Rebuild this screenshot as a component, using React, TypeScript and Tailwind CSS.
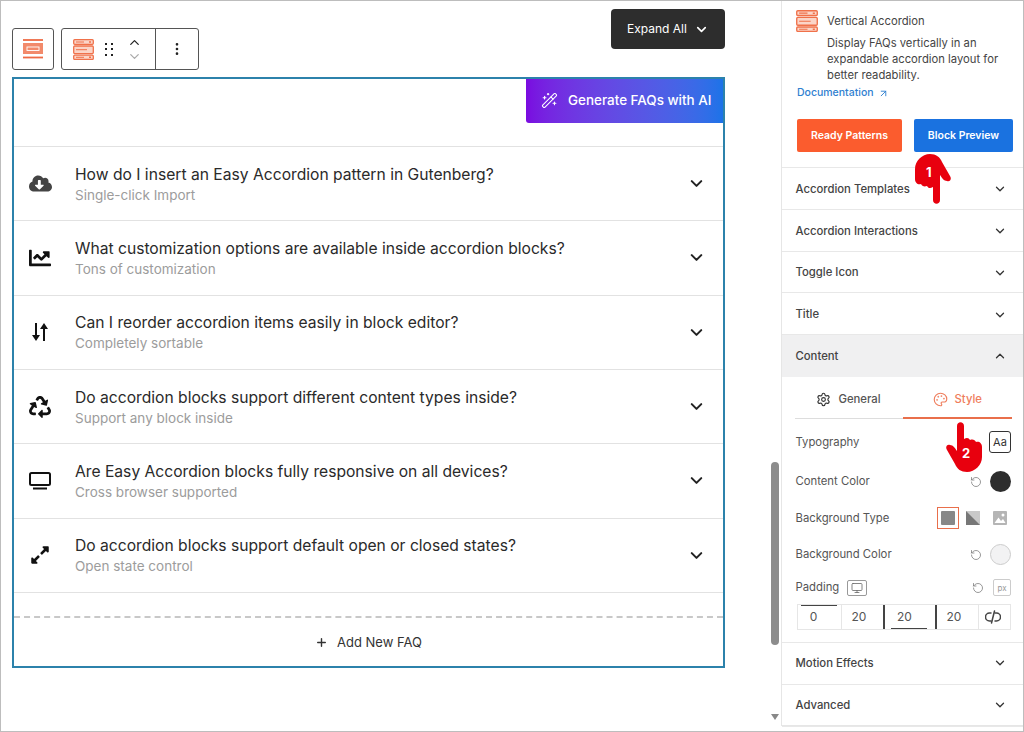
import React from 'react';
import { ArrowUpRight, ChevronDown, ChevronUp, Monitor, MoreVertical, Palette, Plus, RotateCcw, Settings, WandSparkles } from 'lucide-react';
import { FaChartLine, FaCloudDownloadAlt, FaExpandAlt, FaRecycle } from 'react-icons/fa';

const faqs = [
  { title: 'How do I insert an Easy Accordion pattern in Gutenberg?', sub: 'Single-click Import', icon: <FaCloudDownloadAlt className="w-[23px] h-[23px] text-[#444]" /> },
  { title: 'What customization options are available inside accordion blocks?', sub: 'Tons of customization', icon: <FaChartLine className="w-[22px] h-[22px] text-[#111]" /> },
  { title: 'Can I reorder accordion items easily in block editor?', sub: 'Completely sortable', icon: <SortIcon /> },
  { title: 'Do accordion blocks support different content types inside?', sub: 'Support any block inside', icon: <FaRecycle className="w-[22px] h-[22px] text-[#111]" /> },
  { title: 'Are Easy Accordion blocks fully responsive on all devices?', sub: 'Cross browser supported', icon: <LaptopIcon /> },
  { title: 'Do accordion blocks support default open or closed states?', sub: 'Open state control', icon: <FaExpandAlt className="w-[20px] h-[20px] text-[#111]" /> },
];

const closedTop = ['Accordion Templates', 'Accordion Interactions', 'Toggle Icon', 'Title'];

function SortIcon() {
  return (
    <svg viewBox="0 0 16 18" className="w-[16px] h-[18px]" fill="#111">
      <path d="M3 0h2v12h3l-4 6-4-6h3z" />
      <path d="M11 18h2V6h3l-4-6-4 6h3z" />
    </svg>
  );
}

function LaptopIcon() {
  return (
    <svg viewBox="0 0 22 18" className="w-[22px] h-[18px]" fill="none" stroke="#111" strokeWidth="2">
      <rect x="1" y="1" width="20" height="12" rx="1.5" />
      <path d="M4 16.5h14" />
    </svg>
  );
}

function StackIcon({ className }: { className: string }) {
  return (
    <svg viewBox="0 0 21 21" className={className} fill="none" stroke="#f0714a" strokeWidth="1.3">
      <rect x="0.7" y="0.7" width="19.6" height="4.6" rx="1" fill="#fbd5c8" />
      <rect x="0.7" y="7" width="19.6" height="7.6" rx="1" fill="#fbd5c8" />
      <rect x="0.7" y="16.2" width="19.6" height="4.2" rx="1" fill="#fbd5c8" />
      <path d="M3 3h8M3 10.7h11M3 18.3h8" strokeWidth="1" />
      <path d="M16 3h2M16 18.3h2" strokeWidth="1.4" />
    </svg>
  );
}

function Hand({ className }: { className: string }) {
  return (
    <svg viewBox="0 0 36 50" className={className}>
      <path
        fill="#e8000e"
        d="M11 4c0-5 7-5 7 0v13c3-2 5-1 6 1 3-1 5 0 6 2 3-1 6 1 6 5v10c0 8-7 15-15 15-6 0-10-3-12-8L1 28c-2-3 0-6 3-5 3 0 5 3 7 6z"
      />
    </svg>
  );
}

function SideRow({ label, h }: { label: string; h: string }) {
  return (
    <div className={`flex items-center justify-between shrink-0 pl-[13.5px] pr-[16px] text-[11.3px] font-medium text-[#444] border-b border-[#e8e8e8] ${h}`}>
      <span>{label}</span>
      <ChevronDown className="w-[14px] h-[14px] text-[#333]" strokeWidth={2.2} />
    </div>
  );
}

function ResetIcon() {
  return <RotateCcw className="w-[12px] h-[12px] text-[#777]" strokeWidth={1.5} />;
}

export default function App() {
  return (
    <div className="relative w-[1024px] h-[732px] flex bg-white border border-[#bdbdbd] overflow-hidden" style={{ fontFamily: 'Inter, sans-serif' }}>
      <div className="relative w-[780px] shrink-0 h-full">
        <div className="flex justify-between pl-[11px] pr-[56px] pt-[8px]">
          <div className="flex gap-[7px] mt-[19px] h-[42px]">
            <div className="w-[42px] border border-[#555] rounded-[3px] flex items-center justify-center">
              <svg viewBox="0 0 20 20" className="w-[20px] h-[20px]" fill="none">
                <path d="M0 1h20" stroke="#ee6a45" strokeWidth="1.8" />
                <rect x="0" y="4" width="20" height="11" fill="#f28a6b" />
                <rect x="4" y="8" width="12" height="3.5" fill="none" stroke="#fff" strokeWidth="0.9" />
                <path d="M0 18.5h20" stroke="#ee6a45" strokeWidth="1.8" />
              </svg>
            </div>
            <div className="flex border border-[#555] rounded-[3px]">
              <div className="w-[94px] flex items-center pl-[11px] border-r border-[#555]">
                <StackIcon className="w-[21px] h-[21px]" />
                <div className="ml-[11px] grid grid-cols-2 gap-x-[4px] gap-y-[3.5px]">
                  {[0, 1, 2, 3, 4, 5].map(i => (
                    <span key={i} className="w-[2px] h-[2px] bg-[#222]" />
                  ))}
                </div>
                <div className="ml-[14px] flex flex-col items-center">
                  <ChevronUp className="w-[15px] h-[15px] -mb-[1px] text-[#222]" strokeWidth={2} />
                  <ChevronDown className="w-[15px] h-[15px] text-[#aaa]" strokeWidth={2} />
                </div>
              </div>
              <div className="w-[42px] flex items-center justify-center">
                <MoreVertical className="w-[16px] h-[16px] text-[#222]" strokeWidth={2} />
              </div>
            </div>
          </div>
          <div className="w-[114px] h-[40px] bg-[#2d2d2d] rounded-[4px] flex items-center justify-center gap-[7px] text-[12px] text-white">
            <span>Expand All</span>
            <ChevronDown className="w-[15px] h-[15px]" strokeWidth={2.6} />
          </div>
        </div>

        <div className="mt-[7px] ml-[11px] w-[713px] h-[591px] border-2 border-[#2c82ab] flex flex-col">
          <div className="h-[68px] shrink-0 flex justify-end border-b border-[#e2e2e2]">
            <div className="w-[197px] h-[44px] pb-[1px] rounded-bl-[3px] bg-gradient-to-r from-[#7a0ae0] to-[#1b73e8] flex items-center pl-[15px] gap-[10px] text-white text-[13.45px] font-medium">
              <WandSparkles className="w-[17px] h-[17px]" strokeWidth={1.5} />
              <span>Generate FAQs with AI</span>
            </div>
          </div>
          {faqs.map(f => (
            <div key={f.title} className="h-[74.33px] shrink-0 flex items-center border-b border-[#e2e2e2] pl-[14px] pr-[17px]">
              <div className="w-[24px] flex justify-center">{f.icon}</div>
              <div className="ml-[23px] pt-[2px] flex-1">
                <div className="text-[15.65px] leading-[20px] text-[#2a2a2a]">{f.title}</div>
                <div className="text-[13.5px] leading-[20px] text-[#9c9c9c]">{f.sub}</div>
              </div>
              <ChevronDown className="w-[19px] h-[19px] text-[#222]" strokeWidth={2.6} />
            </div>
          ))}
          <div className="mt-[23px] pt-[1px] border-t-2 border-dashed border-[#c8c8c8] flex-1 flex items-center justify-center gap-[9px] text-[13px] text-[#333]">
            <Plus className="w-[13px] h-[13px]" strokeWidth={2.6} />
            <span>Add New FAQ</span>
          </div>
        </div>

        <div className="absolute left-[770px] top-[461px] w-[8px] h-[183px] rounded-[4px] bg-[#8c8c8c]" />
        <div className="absolute left-[770px] top-[713px] w-0 h-0 border-x-[4px] border-x-transparent border-t-[6px] border-t-[#888]" />
      </div>

      <div className="flex-1 h-[725px] border-l border-r border-b border-[#e6e6e6] flex flex-col">
        <div className="h-[167px] shrink-0 border-b border-[#e8e8e8] pl-[14px] pr-[10px] pt-[9px]">
          <div className="flex">
            <StackIcon className="w-[22px] h-[22px] shrink-0" />
            <div className="ml-[9px] mt-[3px] text-[11.25px] leading-[16px] text-[#444]">
              <div className="mb-[6px]">Vertical Accordion</div>
              <div>Display FAQs vertically in an expandable accordion layout for better readability.</div>
            </div>
          </div>
          <div className="mt-[2px] ml-[1px] flex items-center gap-[4px] text-[10.5px] leading-[16px] font-medium text-[#2f80d0]">
            Documentation <ArrowUpRight className="w-[11px] h-[11px]" />
          </div>
          <div className="mt-[18px] ml-[1px] flex gap-[12px] text-[10.5px] font-semibold text-white">
            <div className="w-[105px] h-[33px] rounded-[2px] bg-[#fb5c2e] flex items-center justify-center">Ready Patterns</div>
            <div className="w-[99px] h-[33px] rounded-[2px] bg-[#1a72e0] flex items-center justify-center">Block Preview</div>
          </div>
        </div>

        {closedTop.map(l => <SideRow key={l} label={l} h="h-[41.75px] pt-[2px]" />)}

        <div className="h-[42px] shrink-0 bg-[#f0f0f1] flex items-center justify-between pl-[13.5px] pr-[16px] text-[11.3px] font-medium text-[#444]">
          <span>Content</span>
          <ChevronUp className="w-[14px] h-[14px] text-[#333]" strokeWidth={2.2} />
        </div>

        <div className="h-[266px] shrink-0 border-b border-[#e8e8e8] pl-[13.5px] pr-[11px] text-[11.3px] text-[#555]">
          <div className="flex h-[42px] pt-[4px] -ml-px">
            <div className="w-[108px] flex items-center justify-center gap-[7px] border-b border-[#ddd] text-[#555] font-medium">
              <Settings className="w-[15px] h-[15px] text-[#333]" strokeWidth={1.8} />
              General
            </div>
            <div className="flex-1 flex items-center justify-center gap-[7px] border-b-2 border-[#e96f4b] text-[#ef7d5c] font-medium">
              <Palette className="w-[15px] h-[15px]" strokeWidth={1.8} />
              Style
            </div>
          </div>
          <div className="flex items-center justify-between h-[46px]">
            <span>Typography</span>
            <div className="mr-px w-[22px] h-[22px] border border-[#333] rounded-[3px] flex items-center justify-center text-[11px] text-[#333]">Aa</div>
          </div>
          <div className="flex items-center justify-between h-[33px]">
            <span>Content Color</span>
            <div className="mr-px flex items-center gap-[8px]">
              <ResetIcon />
              <span className="w-[21px] h-[21px] rounded-full bg-[#2d2d2d]" />
            </div>
          </div>
          <div className="flex items-center justify-between h-[40px]">
            <span>Background Type</span>
            <div className="mr-[5px] flex items-center gap-[7px]">
              <div className="w-[22px] h-[22px] border border-[#e96f4b] flex items-center justify-center">
                <span className="w-[14px] h-[14px] rounded-[1px] bg-[#888]" />
              </div>
              <svg viewBox="0 0 14 14" className="w-[14px] h-[14px]">
                <rect width="14" height="14" fill="#c9c9c9" />
                <path d="M0 0L14 14H0z" fill="#777" />
              </svg>
              <svg viewBox="0 0 14 14" className="w-[14px] h-[14px] ml-[6px]">
                <rect width="14" height="14" rx="1" fill="#b5b5b5" />
                <circle cx="10" cy="4" r="1.5" fill="#fff" />
                <path d="M1.5 12L5.5 6.5L8 10L10 8L12.5 12z" fill="#fff" />
              </svg>
            </div>
          </div>
          <div className="flex items-center justify-between h-[33px]">
            <span>Background Color</span>
            <div className="mr-px flex items-center gap-[8px]">
              <ResetIcon />
              <span className="w-[21px] h-[21px] rounded-full bg-[#f2f2f3] border border-[#ccc]" />
            </div>
          </div>
          <div className="flex items-center justify-between h-[33px]">
            <div className="flex items-center gap-[8px]">
              <span>Padding</span>
              <div className="w-[20px] h-[16px] border border-[#999] rounded-[2px] flex items-center justify-center">
                <Monitor className="w-[12px] h-[12px] text-[#666]" strokeWidth={1.6} />
              </div>
            </div>
            <div className="mr-px flex items-center gap-[9px]">
              <ResetIcon />
              <div className="w-[18px] h-[17px] border border-[#ccc] rounded-[2px] flex items-center justify-center text-[8px] text-[#999]">px</div>
            </div>
          </div>
          <div className="ml-px mr-px flex h-[26px] border border-[#e6e6e6] text-[12px] text-[#555]">
            <div className="relative w-[44px] pr-[11px] border-r border-[#e6e6e6] flex items-center justify-center">
              0
              <span className="absolute left-[3px] right-[4px] top-0 h-px bg-[#444]" />
            </div>
            <div className="w-[43px] pr-[6px] border-r-2 border-[#444] flex items-center justify-center">20</div>
            <div className="relative w-[52px] border-r-2 border-[#444] flex items-center justify-center pr-[10px]">
              20
              <span className="absolute left-[6px] right-[8px] bottom-0 h-px bg-[#444]" />
            </div>
            <div className="w-[42px] border-r border-[#e6e6e6] flex items-center pl-[10px]">20</div>
            <div className="flex-1 pr-[2px] flex items-center justify-center">
              <svg viewBox="0 0 16 16" className="w-[16px] h-[16px]" fill="none" stroke="#444" strokeWidth="1.5" strokeLinecap="round">
                <path d="M6 4H4.5a4 4 0 0 0 0 8H6" />
                <path d="M10 4h1.5a4 4 0 0 1 0 8H10" />
                <path d="M9.5 2L6.5 14" />
              </svg>
            </div>
          </div>
        </div>

        <SideRow label="Motion Effects" h="h-[41.5px]" />
        <SideRow label="Advanced" h="h-[42px]" />
      </div>

      <div className="absolute left-[914px] top-[153px] w-[36px] h-[50px]">
        <Hand className="w-[36px] h-[50px] rotate-180" />
        <span className="absolute left-[11px] top-[9px] text-[13px] font-bold text-white">1</span>
      </div>
      <div className="absolute left-[945px] top-[421px] w-[36px] h-[50px]">
        <Hand className="w-[36px] h-[50px]" />
        <span className="absolute left-[16px] top-[22px] text-[13px] font-bold text-white">2</span>
      </div>
    </div>
  );
}
